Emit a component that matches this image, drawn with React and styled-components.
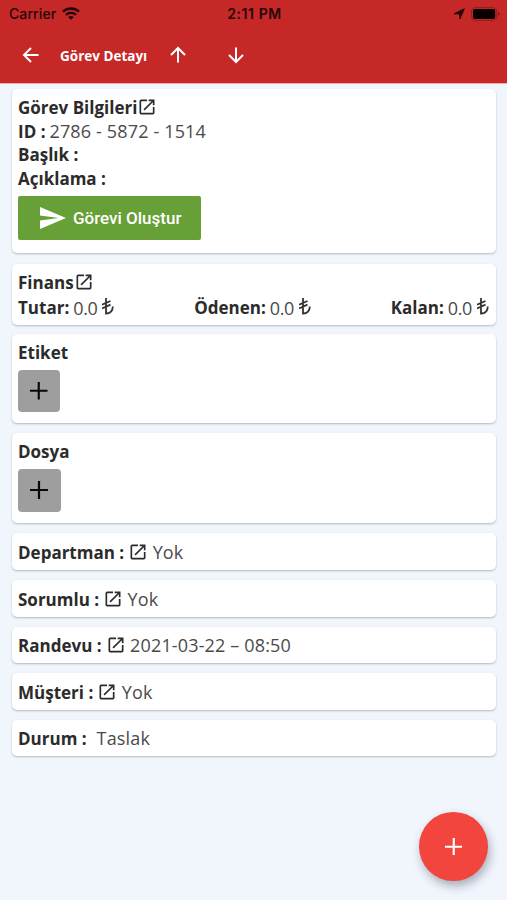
import React from "react";
import styled, { createGlobalStyle } from "styled-components";

const GlobalStyle = createGlobalStyle`
  * { box-sizing: border-box; }
  body { margin: 0; background: #f1f5fc; }
  button { border: 0; padding: 0; font: inherit; }
`;

const Screen = styled.main`
  position: relative;
  width: 507px;
  height: 900px;
  overflow: hidden;
  background: #f1f5fc;
  color: #2b2b2b;
  font-family: "Open Sans", "Noto Sans", sans-serif;
  font-size: 17px;
`;

const Header = styled.header`
  height: 84px;
  background: #c62828;
  border-bottom: 1px solid #f3a9ae;
`;

const StatusBar = styled.div`
  display: grid;
  grid-template-columns: 1fr auto 1fr;
  align-items: center;
  height: 27px;
  padding: 0 7px 0 9px;
  color: #250707;
  font: 500 14px/27px Inter, sans-serif;
`;

const StatusGroup = styled.div`
  display: flex;
  align-items: center;
  justify-content: ${(p) => (p.$end ? "flex-end" : "flex-start")};
  gap: 6px;
  height: 27px;
  letter-spacing: 0.1px;
`;

const Clock = styled.div`
  font-weight: 600;
  letter-spacing: 0.6px;
`;

const Toolbar = styled.div`
  display: flex;
  align-items: center;
  height: 56px;
  padding-left: 19px;
  color: #fff;
`;

const ToolIcon = styled.button`
  display: flex;
  width: 24px;
  height: 24px;
  margin-left: ${(p) => p.$gap || 0}px;
  background: none;
  color: inherit;
`;

const Title = styled.h1`
  width: 88px;
  margin: 1px 0 0 17px;
  font-size: 13.5px;
  font-weight: 700;
  line-height: 24px;
  white-space: nowrap;
`;

const Cards = styled.div`
  display: flex;
  flex-direction: column;
  gap: 10px;
  padding: 5px 11px 0 12px;
`;

const Card = styled.section`
  height: ${(p) => p.$height}px;
  margin-top: ${(p) => p.$shift || 0}px;
  padding: ${(p) => p.$top}px 7px 0 6px;
  border-radius: 5px;
  background: #fff;
  box-shadow: 0 1px 2px rgba(50, 60, 75, 0.32);
`;

const Line = styled.div`
  display: flex;
  align-items: center;
  height: ${(p) => p.$height || 24}px;
  white-space: pre;
`;

const Label = styled.span`
  font-weight: 700;
`;

const Value = styled.span`
  color: #4b4b4b;
  font-size: 18px;
  letter-spacing: ${(p) => p.$spacing ?? 0.15}px;
  margin-left: ${(p) => p.$gap ?? 4}px;
`;

const Amounts = styled.div`
  display: flex;
  justify-content: space-between;
  height: 26px;
  margin-top: 1px;
  line-height: 26px;
`;

const Amount = styled.div`
  display: flex;
  align-items: center;
  white-space: pre;
`;

const Lira = styled.svg`
  width: 12px;
  height: 17px;
  margin: -4px 0 0 5px;
`;

const OpenBox = styled.svg`
  flex: none;
  width: 20px;
  height: 20px;
  margin-left: ${(p) => p.$gap || 0}px;
`;

const CreateButton = styled.button`
  display: flex;
  align-items: center;
  width: 183px;
  height: 44px;
  margin-top: 6px;
  padding-left: 22px;
  border-radius: 2px;
  background: #67a037;
  color: #fff;
  font: 500 17px/44px Roboto, sans-serif;
  white-space: nowrap;
`;

const SendIcon = styled.svg`
  width: 26px;
  height: 22px;
  margin-right: 7px;
`;

const AddTile = styled.button`
  display: flex;
  align-items: center;
  justify-content: center;
  width: ${(p) => p.$size}px;
  height: ${(p) => p.$size}px;
  margin-top: 6px;
  border-radius: 4px;
  background: #9e9e9e;
  color: #080808;
`;

const Fab = styled.button`
  position: absolute;
  left: 419px;
  top: 812px;
  display: flex;
  align-items: center;
  justify-content: center;
  width: 68.5px;
  height: 68.5px;
  border-radius: 50%;
  background: #f1453d;
  color: #fff;
  box-shadow: 2px 5px 10px rgba(50, 60, 85, 0.38);
`;

const paths = {
  back: "M19.5 12H5.5M12 5L5 12L12 19",
  up: "M12 19.5V5.5M5 12L12 5L19 12",
  down: "M12 4.5V18.5M5 12L12 19L19 12",
};

const Arrow = ({ kind }) => (
  <svg width="24" height="24" viewBox="0 0 24 24" fill="none" stroke="currentColor" strokeWidth="2">
    <path d={paths[kind]} />
  </svg>
);

const OpenIcon = ({ gap }) => (
  <OpenBox $gap={gap} viewBox="0 0 24 24" fill="currentColor">
    <path d="M19 19H5V5h7V3H5a2 2 0 0 0-2 2v14a2 2 0 0 0 2 2h14c1.1 0 2-.9 2-2v-7h-2v7zM14 3v2h3.59l-9.83 9.83 1.41 1.41L19 6.41V10h2V3h-7z" />
  </OpenBox>
);

const Plus = ({ size, weight }) => (
  <svg width={size} height={size} viewBox="0 0 18 18" stroke="currentColor" strokeWidth={weight}>
    <path d="M9 0V18M0 9H18" />
  </svg>
);

const Money = ({ label }) => (
  <Amount>
    <Label>{label}:</Label>
    <Value $gap={4} $spacing={-0.4}>0.0</Value>
    <Lira viewBox="0 0 12 17" fill="none" stroke="#333" strokeWidth="1.8">
      <path d="M4 0V15.5C8.5 15.5 10.7 13 10.8 8.5M0 6.8L8.5 3M0 10.4L8.5 6.6" />
    </Lira>
  </Amount>
);

const details = [
  { label: "Departman :", value: "Yok", height: 37, top: 7 },
  { label: "Sorumlu :", value: "Yok", height: 37, top: 7 },
  { label: "Randevu :", value: "2021-03-22 – 08:50", height: 36, top: 6 },
  { label: "Müşteri :", value: "Yok", height: 37, top: 7 },
  { label: "Durum :", value: "Taslak", height: 36, top: 6, plain: true },
];

export default function App() {
  return (
    <Screen>
      <GlobalStyle />
      <Header>
        <StatusBar>
          <StatusGroup>
            <span>Carrier</span>
            <svg width="18" height="13" viewBox="0 0 18 13" fill="none" stroke="currentColor" strokeWidth="2.4">
              <path d="M1 4.6C5.5.4 12.5.4 17 4.6M4 7.8C6.8 5.2 11.2 5.2 14 7.8" />
              <path d="M6.2 10C7.8 8.5 10.2 8.5 11.8 10L9 12.8Z" fill="currentColor" stroke="none" />
            </svg>
          </StatusGroup>
          <Clock>2:11 PM</Clock>
          <StatusGroup $end>
            <svg width="12" height="12" viewBox="0 0 12 12" fill="currentColor" stroke="currentColor" strokeLinejoin="round">
              <path d="M11.3.8L6.9 10.9L6.4 5.8H1Z" />
            </svg>
            <svg width="29" height="14" viewBox="0 0 29 14">
              <rect x=".6" y=".6" width="25" height="12.8" rx="3.5" fill="none" stroke="#8f1d1d" />
              <rect x="2" y="2" width="22.2" height="10" rx="2" fill="#080000" />
              <path d="M27 5C29 5.7 29 8.3 27 9Z" fill="#7c1919" />
            </svg>
          </StatusGroup>
        </StatusBar>
        <Toolbar>
          <ToolIcon aria-label="Geri"><Arrow kind="back" /></ToolIcon>
          <Title>Görev Detayı</Title>
          <ToolIcon $gap={18} aria-label="Yukarı"><Arrow kind="up" /></ToolIcon>
          <ToolIcon $gap={34} aria-label="Aşağı"><Arrow kind="down" /></ToolIcon>
        </Toolbar>
      </Header>
      <Cards>
        <Card $height={164} $top={6}>
          <Line $height={24}><Label>Görev Bilgileri</Label><OpenIcon /></Line>
          <Line $height={24}><Label>ID :</Label><Value>2786 - 5872 - 1514</Value></Line>
          <Line $height={23}><Label>Başlık :</Label></Line>
          <Line $height={24}><Label>Açıklama :</Label></Line>
          <CreateButton>
            <SendIcon viewBox="2 3 21 18" preserveAspectRatio="none" fill="currentColor">
              <path d="M2.01 21L23 12 2.01 3 2 10l15 2-15 2z" />
            </SendIcon>
            Görevi Oluştur
          </CreateButton>
        </Card>
        <Card $height={61} $shift={1} $top={6}>
          <Line><Label>Finans</Label><OpenIcon /></Line>
          <Amounts>
            <Money label="Tutar" />
            <Money label="Ödenen" />
            <Money label="Kalan" />
          </Amounts>
        </Card>
        <Card $height={89} $shift={-1} $top={6}>
          <Line><Label>Etiket</Label></Line>
          <AddTile $size={41.5} aria-label="Etiket ekle"><Plus size={17.5} weight={2.2} /></AddTile>
        </Card>
        <Card $height={90} $top={6}>
          <Line><Label>Dosya</Label></Line>
          <AddTile $size={42.5} aria-label="Dosya ekle"><Plus size={18} weight={2.2} /></AddTile>
        </Card>
        {details.map((d) => (
          <Card key={d.label} $height={d.height} $top={d.top}>
            <Line>
              <Label>{d.label}</Label>
              {!d.plain && <OpenIcon gap={4} />}
              <Value $gap={d.plain ? 10 : 4.5}>{d.value}</Value>
            </Line>
          </Card>
        ))}
      </Cards>
      <Fab aria-label="Ekle"><Plus size={17.5} weight={2.2} /></Fab>
    </Screen>
  );
}
